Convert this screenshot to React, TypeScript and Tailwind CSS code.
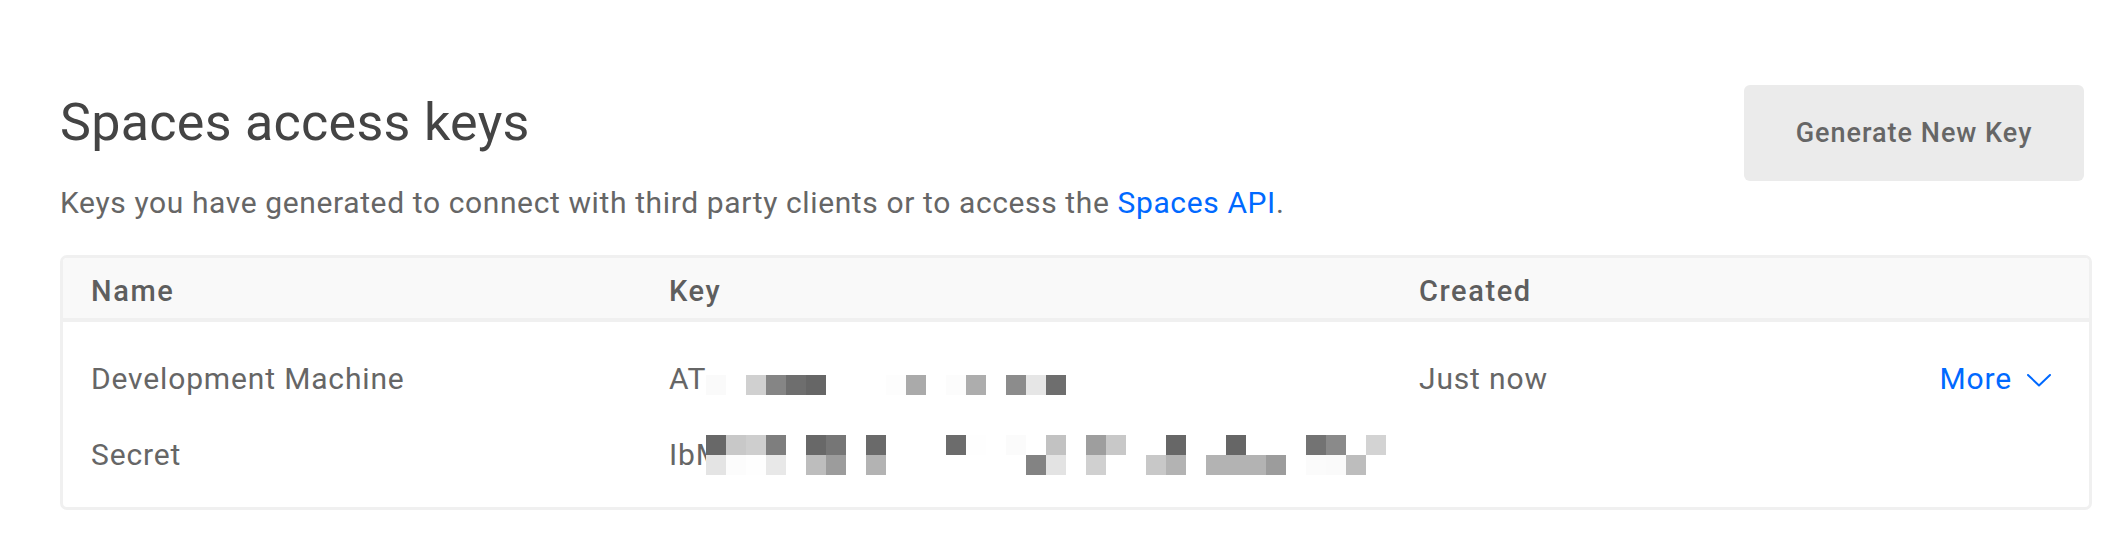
import React from "react";

const W = "#ffffff";

const row1: string[] = [
  "#fafafa", W, "#d0d0d0", "#858585", "#6e6e6e", "#666666", W, W, W, "#fdfdfd",
  "#aaaaaa", W, "#fcfcfc", "#adadad", W, "#8c8c8c", "#e6e6e6", "#6e6e6e",
];

const row2Top: string[] = [
  "#686868", "#c8c8c8", "#cecece", "#7e7e7e", W, "#686868", "#767676", W, "#6a6a6a", W,
  W, W, "#6c6c6c", "#fefefe", W, "#fbfbfb", W, "#c2c2c2", W, "#9e9e9e",
  "#c8c8c8", W, W, "#676767", W, W, "#666666", W, W, W,
  "#737373", "#8a8a8a", W, "#d3d3d3",
];

const row2Bottom: string[] = [
  "#e4e4e4", "#fcfcfc", "#fefefe", "#e8e8e8", W, "#bdbdbd", "#9c9c9c", W, "#b3b3b3", W,
  W, W, W, W, W, W, "#838383", "#e3e3e3", W, "#d0d0d0",
  W, W, "#c8c8c8", "#b3b3b3", W, "#b3b3b3", "#b3b3b3", "#b3b3b3", "#9c9c9c", W,
  "#fbfbfb", "#fafafa", "#bdbdbd", W,
];

function Pixels({ rows }: { rows: string[][] }) {
  return (
    <div className="flex flex-col bg-white">
      {rows.map((r, i) => (
        <div key={i} className="flex">
          {r.map((c, j) => (
            <div key={j} className="h-[20px] w-[20px]" style={{ backgroundColor: c }} />
          ))}
        </div>
      ))}
    </div>
  );
}

function Chevron() {
  return (
    <svg width="24" height="13" viewBox="0 0 24 13" fill="none" className="mt-[3px]">
      <polyline points="1,1 12,11.5 23,1" stroke="#0069ff" strokeWidth="2" strokeLinecap="round" strokeLinejoin="round" />
    </svg>
  );
}

export default function App() {
  const cols = "grid grid-cols-[578px_750px_1fr_auto] pl-[28px] pr-[38px]";
  return (
    <div className="h-[550px] w-[2120px] bg-white pl-[60px] pr-[28px] pt-[85px] font-['Roboto',sans-serif]">
      <div className="flex items-start justify-between">
        <div>
          <h1 className="mt-[8px] text-[52px] font-normal leading-[60px] tracking-[0.3px] text-[#444444]">
            Spaces access keys
          </h1>
          <p className="mt-[32px] text-[30px] leading-[36px] tracking-[0.62px] text-[#666666]">
            Keys you have generated to connect with third party clients or to access the{" "}
            <span className="text-[#0069ff]">Spaces API</span>.
          </p>
        </div>
        <button className="mr-[8px] flex h-[96px] w-[340px] items-center justify-center rounded-[6px] bg-[#ebebeb] text-[27px] font-medium tracking-[1px] text-[#666666]">
          Generate New Key
        </button>
      </div>

      <div className="mt-[34px] overflow-hidden rounded-[7px] border-[3px] border-[#f0f0f0]">
        <div className={`${cols} h-[64px] items-center border-b-[4px] border-[#f0f0f0] bg-[#f9f9f9] pt-[5px] text-[29px] font-medium leading-[34px] tracking-[1.6px] text-[#5e5e5e]`}>
          <div>Name</div>
          <div>Key</div>
          <div>Created</div>
          <div />
        </div>
        <div className="pb-[14px] pt-[19px] text-[30px] leading-[36px] tracking-[0.85px] text-[#666666]">
          <div className={`${cols} h-[76px] items-center`}>
            <div>Development Machine</div>
            <div className="flex items-center">
              <span className="w-[37px] whitespace-nowrap">AT</span>
              <div className="mt-[12px]">
                <Pixels rows={[row1]} />
              </div>
            </div>
            <div>Just now</div>
            <div className="flex items-center gap-[15px] text-[#0069ff]">
              <span>More</span>
              <Chevron />
            </div>
          </div>
          <div className={`${cols} h-[76px] items-center`}>
            <div>Secret</div>
            <div className="flex items-center">
              <span className="w-[37px] whitespace-nowrap">IbM</span>
              <Pixels rows={[row2Top, row2Bottom]} />
            </div>
            <div />
            <div />
          </div>
        </div>
      </div>
    </div>
  );
}
